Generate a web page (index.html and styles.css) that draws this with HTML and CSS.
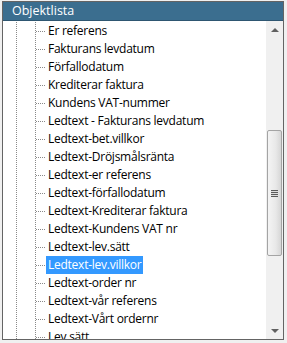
FILE: index.html
```html
<!DOCTYPE html>
<html lang="sv">
<head>
    <meta charset="UTF-8">
    <title>Objektlista</title>
    <link rel="stylesheet" href="styles.css">
</head>
<body>
    <div class="panel">
        <div class="title">Objektlista</div>
        <div class="body">
            <div class="tree">
                <div class="guide outer">
                    <div class="guide inner">
                        <div class="row"><span class="label">Er referens</span></div>
                        <div class="row"><span class="label">Fakturans levdatum</span></div>
                        <div class="row"><span class="label">Förfallodatum</span></div>
                        <div class="row"><span class="label">Krediterar faktura</span></div>
                        <div class="row"><span class="label">Kundens VAT-nummer</span></div>
                        <div class="row"><span class="label">Ledtext - Fakturans levdatum</span></div>
                        <div class="row"><span class="label">Ledtext-bet.villkor</span></div>
                        <div class="row"><span class="label">Ledtext-Dröjsmålsränta</span></div>
                        <div class="row"><span class="label">Ledtext-er referens</span></div>
                        <div class="row"><span class="label">Ledtext-förfallodatum</span></div>
                        <div class="row"><span class="label">Ledtext-Krediterar faktura</span></div>
                        <div class="row"><span class="label">Ledtext-Kundens VAT nr</span></div>
                        <div class="row"><span class="label">Ledtext-lev.sätt</span></div>
                        <div class="row selected"><span class="label">Ledtext-lev.villkor</span></div>
                        <div class="row"><span class="label">Ledtext-order nr</span></div>
                        <div class="row"><span class="label">Ledtext-vår referens</span></div>
                        <div class="row"><span class="label">Ledtext-Vårt ordernr</span></div>
                        <div class="row"><span class="label">Lev.sätt</span></div>
                    </div>
                </div>
            </div>
            <div class="scrollbar">
                <div class="arrow up"></div>
                <div class="track">
                    <div class="thumb" style="margin-top: 92px; height: 124px;">
                        <div class="grip"></div>
                    </div>
                </div>
                <div class="arrow down"></div>
            </div>
        </div>
    </div>
</body>
</html>
```

FILE: styles.css
```css
body {
    margin: 0;
    background-color: #f0f0f0;
    font-family: "Open Sans", "Noto Sans", sans-serif;
    font-size: 12px;
    letter-spacing: -0.25px;
}

.panel {
    width: 282px;
    height: 339px;
    margin: 1px 0 0 2px;
    display: flex;
    flex-direction: column;
    border: 1px solid #646464;
    box-sizing: border-box;
    background-color: white;
}

.title {
    height: 19px;
    line-height: 18px;
    padding-left: 9px;
    background-color: #3b6e8f;
    border-bottom: 1px solid #2e5671;
    color: white;
    font-size: 12.5px;
    letter-spacing: 0;
    box-sizing: border-box;
}

.body {
    flex: 1;
    display: flex;
    min-height: 0;
}

.tree {
    flex: 1;
    overflow: hidden;
    padding-top: 1px;
}

.guide {
    border-left: 1px dotted #8a8a8a;
    height: 100%;
}

.outer {
    margin-left: 13px;
}

.inner {
    margin-left: 18px;
}

.row {
    height: 18px;
    display: flex;
    align-items: center;
    white-space: nowrap;
}

.row::before {
    content: "";
    width: 9px;
    border-top: 1px dotted #8a8a8a;
    margin-right: 1px;
}

.label {
    padding: 0 2px;
    line-height: 18px;
    color: #000;
}

.selected .label {
    background-color: #3399ff;
    color: white;
}

.scrollbar {
    width: 17px;
    display: flex;
    flex-direction: column;
    background-color: #f0f0f0;
}

.arrow {
    height: 17px;
    display: flex;
    align-items: center;
    justify-content: center;
}

.arrow::after {
    content: "";
    border-left: 4px solid transparent;
    border-right: 4px solid transparent;
}

.up::after {
    border-bottom: 4px solid #606060;
}

.down::after {
    border-top: 4px solid #606060;
}

.track {
    flex: 1;
    padding: 0 1px;
}

.thumb {
    border: 1px solid #a4a4a4;
    border-radius: 2px;
    background: linear-gradient(to right, #f4f4f4, #e8e8e8 60%, #d6d6d6);
    display: flex;
    align-items: center;
    justify-content: center;
}

.grip {
    width: 7px;
    height: 7px;
    background: repeating-linear-gradient(to bottom, #5a5a5a 0 1px, #dcdcdc 1px 2px);
}
```
